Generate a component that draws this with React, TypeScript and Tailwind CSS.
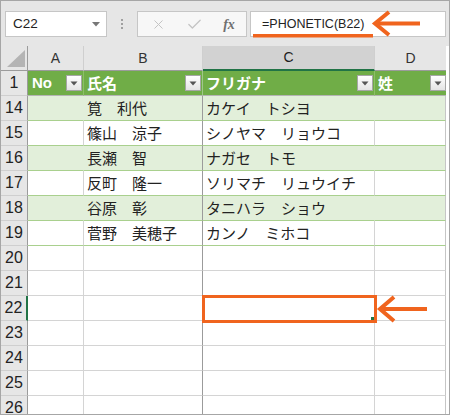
import { Check, X } from 'lucide-react';

const COLS = 'grid grid-cols-[27px_56px_119px_172px_71px]';
const JP = "font-['Noto_Sans_CJK_JP',sans-serif]";

const rows = [
  { n: 14, name: '筧　利代', kana: 'カケイ　トシヨ' },
  { n: 15, name: '篠山　涼子', kana: 'シノヤマ　リョウコ' },
  { n: 16, name: '長瀬　智', kana: 'ナガセ　トモ' },
  { n: 17, name: '反町　隆一', kana: 'ソリマチ　リュウイチ' },
  { n: 18, name: '谷原　彰', kana: 'タニハラ　ショウ' },
  { n: 19, name: '菅野　美穂子', kana: 'カンノ　ミホコ' },
];

const empty = [20, 21, 22, 23, 24, 25, 26];

const FilterButton = () => (
  <span className="flex h-[16px] w-[16px] shrink-0 items-center justify-center border border-[#a6a6a6] bg-gradient-to-b from-white to-[#e4e4e4]">
    <svg width="8" height="5" viewBox="0 0 8 5">
      <path d="M0.5 0.5 L7.5 0.5 L4 4.5 Z" fill="#555" />
    </svg>
  </span>
);

const RowHead = ({ n, active }: { n: number; active?: boolean }) => (
  <div
    className={`flex items-center justify-center border-b border-b-[#cfcfcf] bg-[#e6e6e6] font-['Liberation_Sans',sans-serif] text-[16px] font-normal text-[#222] ${
      active ? 'border-r-2 border-r-[#217346]' : 'border-r border-r-[#9b9b9b]'
    }`}
  >
    {n}
  </div>
);

export default function App() {
  return (
    <div className="relative h-[415px] w-[450px] overflow-hidden bg-white">
      <div className="flex h-full flex-col overflow-hidden border border-[#a6a6a6]">
        {/* formula bar */}
        <div className="flex h-[45px] shrink-0 items-start bg-[#e6e6e6] pt-[10px]">
          <div className="ml-[4px] flex h-[26px] w-[102px] items-center justify-between border border-[#c6c6c6] bg-white pl-[7px] pr-[6px] font-['Liberation_Sans',sans-serif] text-[13.5px] text-[#222]">
            C22
            <svg width="8" height="5" viewBox="0 0 8 5">
              <path d="M0 0 L8 0 L4 4.5 Z" fill="#777" />
            </svg>
          </div>
          <div className="flex h-[26px] w-[30px] flex-col items-center justify-center gap-[2px]">
            <span className="h-[2px] w-[2px] bg-[#a0a0a0]" />
            <span className="h-[2px] w-[2px] bg-[#a0a0a0]" />
            <span className="h-[2px] w-[2px] bg-[#a0a0a0]" />
          </div>
          <div className="flex h-[26px] w-[110px] items-center border border-[#c6c6c6] bg-[#f7f7f7]">
            <span className="flex w-[38px] justify-center pl-[2px]">
              <X size={15} strokeWidth={1.6} color="#c4c4c4" />
            </span>
            <span className="flex w-[36px] justify-center">
              <Check size={17} strokeWidth={1.8} color="#c4c4c4" />
            </span>
            <span className="flex w-[34px] justify-center font-['Liberation_Serif',serif] text-[14px] font-bold italic text-[#707070]">
              fx
            </span>
          </div>
          <div className="ml-[3px] flex h-[26px] w-[196px] items-center border border-[#c6c6c6] bg-white pl-[11px] font-['Liberation_Sans',sans-serif] text-[12.5px] text-[#222]">
            =PHONETIC(B22)
          </div>
        </div>

        {/* column headers */}
        <div className={`${COLS} h-[25px] shrink-0 font-['Liberation_Sans',sans-serif] text-[14px] text-[#333]`}>
          <div className="flex items-end justify-end border-b border-r border-[#9b9b9b] bg-[#e6e6e6] pb-[3px] pr-[2px]">
            <svg width="18" height="17" viewBox="0 0 18 17">
              <path d="M18 0 L18 17 L0 17 Z" fill="#b4b4b4" />
            </svg>
          </div>
          <div className="flex items-center justify-center border-b border-r border-b-[#9b9b9b] border-r-[#cfcfcf] bg-[#e6e6e6]">A</div>
          <div className="flex items-center justify-center border-b border-r border-b-[#9b9b9b] border-r-[#cfcfcf] bg-[#e6e6e6]">B</div>
          <div className="flex items-center justify-center border-b-2 border-r border-b-[#217346] border-r-[#cfcfcf] bg-[#d2d2d2] text-[#1d1d1d]">C</div>
          <div className="flex items-center justify-center border-b border-b-[#9b9b9b] bg-[#e6e6e6]">D</div>
        </div>

        {/* table header row */}
        <div className={`${COLS} h-[25px] shrink-0 ${JP} text-[15px] font-bold text-white`}>
          <RowHead n={1} />
          <div className="flex items-center justify-between border-b border-r border-b-[#b4b4b4] border-r-[#8cbf67] bg-[#70ad47] pl-[4px] pr-[1px] font-['Liberation_Sans',sans-serif]">
            No
            <FilterButton />
          </div>
          <div className="flex items-center justify-between border-b border-r border-b-[#b4b4b4] border-r-[#9fc98a] bg-[#70ad47] pl-[3px] pr-[1px]">
            氏名
            <FilterButton />
          </div>
          <div className="flex items-center justify-between border-b border-r border-b-[#b4b4b4] border-r-[#8cbf67] bg-[#70ad47] pl-[3px] pr-[1px]">
            フリガナ
            <FilterButton />
          </div>
          <div className="flex items-center justify-between border-b border-b-[#b4b4b4] bg-[#70ad47] pl-[3px]">
            姓
            <FilterButton />
          </div>
        </div>

        {/* data rows */}
        {rows.map((r, i) => {
          const band = i % 2 === 0;
          const bg = band ? 'bg-[#e2efda]' : 'bg-white';
          const line = band ? 'border-r-[#e2efda]' : 'border-r-[#d4d4d4]';
          return (
            <div key={r.n} className={`${COLS} h-[25px] shrink-0 ${JP} text-[15px] text-[#222]`}>
              <RowHead n={r.n} />
              <div className={`border-b border-r border-b-[#a9d08e] ${line} ${bg}`} />
              <div className={`flex items-center border-b border-r border-b-[#a9d08e] border-r-[#9b9b9b] pl-[3px] ${bg}`}>
                {r.name}
              </div>
              <div className={`flex items-center border-b border-r border-b-[#a9d08e] ${line} pl-[3px] ${bg}`}>
                {r.kana}
              </div>
              <div className={`border-b border-r border-b-[#a9d08e] border-r-[#c6c6c6] ${bg}`} />
            </div>
          );
        })}

        {/* empty rows */}
        {empty.map((n) => (
          <div key={n} className={`${COLS} h-[25px] shrink-0`}>
            <RowHead n={n} active={n === 22} />
            <div className="border-b border-r border-[#d4d4d4]" />
            <div className="border-b border-r border-b-[#d4d4d4] border-r-[#9b9b9b]" />
            <div className="border-b border-r border-[#d4d4d4]" />
            <div className="border-b border-r border-b-[#d4d4d4] border-r-[#c6c6c6]" />
          </div>
        ))}
      </div>

      {/* selected cell highlight */}
      <div className="pointer-events-none absolute left-[202px] top-[295px] h-[28px] w-[175px] border-[3px] border-[#f0641e]">
        <span className="absolute bottom-0 right-0 h-[3px] w-[3px] bg-[#217346]" />
      </div>

      {/* callout arrows */}
      <svg className="pointer-events-none absolute left-0 top-0" width="450" height="415" viewBox="0 0 450 415">
        <rect x="253" y="34" width="120" height="3.5" fill="#f0641e" />
        <line x1="378" y1="23.5" x2="420" y2="23.5" stroke="#f0641e" strokeWidth="4" />
        <polyline points="389,12 375,23.5 389,35" fill="none" stroke="#f0641e" strokeWidth="4" />
        <line x1="383" y1="309" x2="427" y2="309" stroke="#f0641e" strokeWidth="4" />
        <polyline points="394,297 380,309 394,321" fill="none" stroke="#f0641e" strokeWidth="4" />
      </svg>
    </div>
  );
}
